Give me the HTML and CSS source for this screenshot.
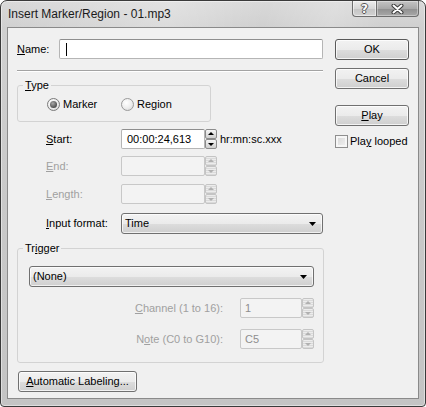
FILE: index.html
```html
<!DOCTYPE html>
<html lang="en">
<head>
<meta charset="utf-8">
<title>Insert Marker/Region - 01.mp3</title>
<link rel="stylesheet" href="styles.css">
</head>
<body>
<div class="window">
  <div class="titlebar">
    <span class="title">Insert Marker/Region - 01.mp3</span>
    <div class="caption">
      <div class="cap cap-help"><span class="q">?</span></div>
      <div class="cap cap-close">
        <svg width="13" height="10" viewBox="0 0 13 10"><path d="M2.5 1.5L10.5 8.5M10.5 1.5L2.5 8.5" stroke="#3a3a3a" stroke-width="4" stroke-linecap="round"/><path d="M2.5 1.5L10.5 8.5M10.5 1.5L2.5 8.5" stroke="#ffffff" stroke-width="2" stroke-linecap="round"/></svg>
      </div>
    </div>
  </div>
  <div class="client">
    <div class="main">
      <div class="name-row">
        <span class="name-label"><u>N</u>ame:</span>
        <div class="textbox name-box"><span class="caret"></span></div>
      </div>
      <div class="sep"></div>
      <fieldset class="group type-group">
        <legend><u>T</u>ype</legend>
        <div class="type-body">
          <span class="opt opt-marker"><span class="radio checked"></span>Marker</span>
          <span class="opt"><span class="radio"></span>Region</span>
        </div>
      </fieldset>
      <div class="field f-start">
        <span class="flabel"><u>S</u>tart:</span>
        <div class="textbox time">00:00:24,613</div>
        <div class="spin"><span class="sb up"></span><span class="sb down"></span></div>
        <span class="unit">hr:mn:sc.xxx</span>
      </div>
      <div class="field f-end disabled">
        <span class="flabel"><u>E</u>nd:</span>
        <div class="textbox time off"></div>
        <div class="spin off"><span class="sb up"></span><span class="sb down"></span></div>
      </div>
      <div class="field f-length disabled">
        <span class="flabel"><u>L</u>ength:</span>
        <div class="textbox time off"></div>
        <div class="spin off"><span class="sb up"></span><span class="sb down"></span></div>
      </div>
      <div class="field f-format">
        <span class="flabel"><u>I</u>nput format:</span>
        <div class="combo format-combo"><span>Time</span><svg class="arrow" width="7" height="4" viewBox="0 0 7 4"><path d="M0 0H7L3.5 4Z" fill="#000"/></svg></div>
      </div>
      <fieldset class="group trigger-group">
        <legend>Tr<u>i</u>gger</legend>
        <div class="trigger-body">
          <div class="combo"><span>(None)</span><svg class="arrow" width="7" height="4" viewBox="0 0 7 4"><path d="M0 0H7L3.5 4Z" fill="#000"/></svg></div>
          <div class="sub-field disabled s-channel">
            <span class="slabel"><u>C</u>hannel (1 to 16):</span>
            <div class="textbox small off">1</div>
            <div class="spin off"><span class="sb up"></span><span class="sb down"></span></div>
          </div>
          <div class="sub-field disabled s-note">
            <span class="slabel">N<u>o</u>te (C0 to G10):</span>
            <div class="textbox small off">C5</div>
            <div class="spin off"><span class="sb up"></span><span class="sb down"></span></div>
          </div>
        </div>
      </fieldset>
      <div class="btn auto-btn"><u>A</u>utomatic Labeling...</div>
    </div>
    <div class="side">
      <div class="btn default">OK</div>
      <div class="btn b-cancel">Cancel</div>
      <div class="btn b-play"><u>P</u>lay</div>
      <div class="check-row"><span class="check"></span><span>Pla<u>y</u> looped</span></div>
    </div>
  </div>
</div>
</body>
</html>
```
FILE: styles.css
```css
* { box-sizing: border-box; }
html, body { margin: 0; padding: 0; }
body {
  font-family: "Liberation Sans", Arial, sans-serif;
  font-size: 11px;
  line-height: 13px;
  color: #000;
  background: #ffffff;
}
u { text-decoration: underline; text-underline-offset: 1px; }

.window {
  width: 426px;
  height: 407px;
  border: 1px solid #3a3a3a;
  border-radius: 7px 7px 4px 4px;
  background: linear-gradient(to bottom, #d9d9d9 0, #d0d0d0 26px, #c9c9c9 200px, #c4c4c4 100%);
  display: flex;
  flex-direction: column;
  overflow: hidden;
  box-shadow: inset 0 0 0 1px rgba(255,255,255,0.45);
}

.titlebar {
  height: 26px;
  flex: none;
  display: flex;
  align-items: flex-start;
  padding-left: 7px;
  background: linear-gradient(105deg, rgba(255,255,255,0) 0, rgba(255,255,255,0.25) 40%, rgba(255,255,255,0) 62%, rgba(255,255,255,0.2) 78%, rgba(255,255,255,0) 90%);
}
.title {
  font-size: 12px;
  line-height: 14px;
  margin-top: 6px;
  color: #1a1a1a;
}
.caption {
  margin-left: auto;
  margin-right: 6px;
  display: flex;
  height: 16px;
}
.cap {
  height: 16px;
  border: 1px solid #6e6e6e;
  border-top: none;
  display: flex;
  align-items: center;
  justify-content: center;
}
.cap-help {
  width: 24px;
  border-right: none;
  border-radius: 0 0 0 4px;
  background: linear-gradient(to bottom, #ececec 0, #d6d6d6 50%, #c4c4c4 51%, #d2d2d2 100%);
  box-shadow: inset 0 0 0 1px rgba(255,255,255,0.5);
}
.q {
  font-family: "DejaVu Sans", sans-serif;
  font-weight: bold;
  font-size: 12px;
  line-height: 12px;
  color: #fafafa;
  text-shadow: 1px 0 0 #555, -1px 0 0 #555, 0 1px 0 #555, 0 -1px 0 #555;
}
.cap-close {
  width: 43px;
  border-radius: 0 0 4px 0;
  background: linear-gradient(to bottom, #c4c4c4 0, #a9a9a9 50%, #8f8f8f 51%, #a8a8a8 100%);
  box-shadow: inset 0 0 0 1px rgba(255,255,255,0.35);
}

.client {
  flex: 1;
  margin: 0 6px 7px;
  border: 1px solid #8a8a8a;
  background: #f0f0f0;
  display: flex;
  align-items: flex-start;
  padding: 11px 0 0 9px;
}
.main {
  width: 306px;
  display: flex;
  flex-direction: column;
}
.side {
  width: 74px;
  margin-left: 12px;
  display: flex;
  flex-direction: column;
}

.name-row {
  height: 20px;
  display: flex;
  align-items: center;
}
.name-label { width: 42px; }
.textbox {
  height: 20px;
  border: 1px solid #b5b5b5;
  border-top-color: #8e8e8e;
  border-radius: 2px;
  background: #ffffff;
  display: flex;
  align-items: center;
  padding-left: 5px;
}
.name-box { width: 264px; padding-left: 6px; }
.caret {
  width: 1px;
  height: 13px;
  background: #000;
}
.sep {
  margin-top: 11px;
  height: 2px;
  border-top: 1px solid #a3a3a3;
  border-bottom: 1px solid #ffffff;
}

.group {
  margin: 0;
  padding: 0;
  border: 1px solid #d3d3d3;
  border-radius: 3px;
  min-width: 0;
}
.group legend {
  margin-left: 5px;
  padding: 0 2px;
  line-height: 14px;
  height: 14px;
}
.type-group {
  width: 194px;
  margin-top: 6px;
}
.type-body {
  display: flex;
  align-items: center;
  padding: 6px 0 10px 29px;
}
.opt {
  display: flex;
  align-items: center;
  height: 13px;
}
.opt-marker { width: 74px; }
.radio {
  width: 13px;
  height: 13px;
  margin-right: 3px;
  border-radius: 50%;
  border: 1px solid #9a9a9a;
  background: radial-gradient(circle at 40% 35%, #ffffff 0, #ececec 55%, #d0d0d0 100%);
  position: relative;
  flex: none;
}
.radio.checked { border-color: #7a7a7a; }
.radio.checked::after {
  content: "";
  position: absolute;
  left: 2px;
  top: 2px;
  width: 7px;
  height: 7px;
  border-radius: 50%;
  background: radial-gradient(circle at 40% 35%, #a8a8a8 0, #4a4a4a 75%, #333333 100%);
}

.field {
  height: 20px;
  display: flex;
  align-items: center;
  padding-left: 29px;
}
.f-start { margin-top: 7px; }
.f-end { margin-top: 7px; }
.f-length { margin-top: 8px; }
.f-format { margin-top: 9px; height: 21px; }
.flabel { width: 75px; }
.time { width: 84px; }
.disabled { color: #a0a0a0; }
.textbox.off {
  background: #f3f3f3;
  border-color: #c8c8c8;
  color: #8e8e8e;
}
.unit { margin-left: 3px; }

.spin {
  width: 12px;
  height: 20px;
  display: flex;
  flex-direction: column;
  flex: none;
}
.sb {
  flex: 1;
  position: relative;
  border: 1px solid #8c8c8c;
  border-radius: 2px;
  background: linear-gradient(to bottom, #f6f6f6 0, #e2e2e2 50%, #cfcfcf 100%);
}
.sb::after {
  content: "";
  position: absolute;
  left: 2px;
  border-left: 3px solid transparent;
  border-right: 3px solid transparent;
}
.sb.up::after { top: 2px; border-bottom: 3px solid #000; }
.sb.down::after { bottom: 2px; border-top: 3px solid #000; }
.spin.off .sb {
  border-color: #c4c4c4;
  background: repeating-linear-gradient(to bottom, #ececec 0, #ececec 1px, #dadada 1px, #dadada 2px);
}
.spin.off .sb.up::after { border-bottom-color: #b0b0b0; }
.spin.off .sb.down::after { border-top-color: #b0b0b0; }

.combo {
  height: 21px;
  border: 1px solid #707070;
  border-radius: 3px;
  background: linear-gradient(to bottom, #f3f3f3 0, #ebebeb 50%, #dddddd 51%, #cfcfcf 100%);
  box-shadow: inset 0 0 0 1px rgba(255,255,255,0.7);
  display: flex;
  align-items: center;
  padding: 0 6px 0 3px;
}
.combo .arrow { margin-left: auto; display: block; }
.format-combo { width: 202px; }

.trigger-group {
  width: 307px;
  margin-top: 7px;
}
.trigger-body {
  padding: 11px 9px 13px 11px;
  display: flex;
  flex-direction: column;
}
.sub-field {
  height: 20px;
  display: flex;
  align-items: center;
  justify-content: flex-end;
  margin-top: 11px;
}
.slabel { margin-right: 17px; }
.small { width: 62px; padding-left: 4px; }

.btn {
  height: 21px;
  border: 1px solid #707070;
  border-radius: 3px;
  background: linear-gradient(to bottom, #f2f2f2 0, #ebebeb 50%, #dddddd 51%, #cfcfcf 100%);
  box-shadow: inset 0 0 0 1px rgba(255,255,255,0.75);
  display: flex;
  align-items: center;
  justify-content: center;
}
.btn.default { border-color: #5a5a5a; }
.b-cancel { margin-top: 8px; }
.b-play { margin-top: 16px; }
.auto-btn {
  margin-top: 8px;
  margin-left: 1px;
  width: 119px;
}
.check-row {
  margin-top: 9px;
  display: flex;
  align-items: center;
  height: 13px;
}
.check {
  width: 13px;
  height: 13px;
  margin-right: 2px;
  border: 1px solid #8e8e8e;
  background: linear-gradient(135deg, #d4d4d4 0, #f4f4f4 100%);
  box-shadow: inset 0 0 0 2px #f6f6f6;
  flex: none;
}
```
